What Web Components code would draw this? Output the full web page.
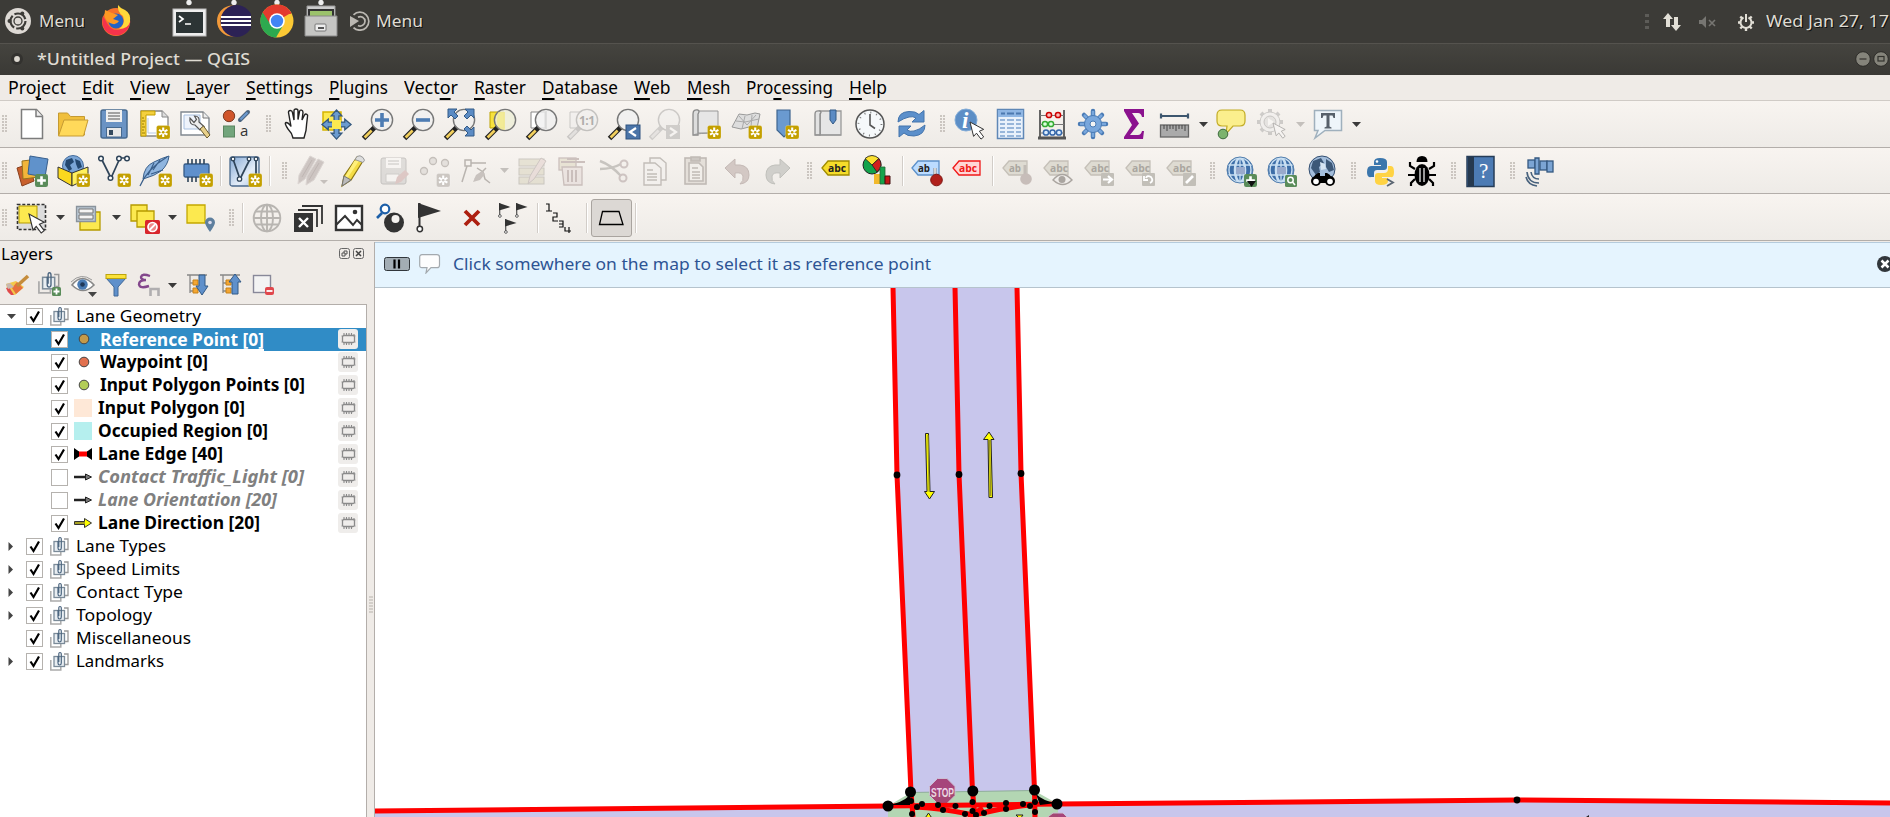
<!DOCTYPE html>
<html lang="en">
<head>
<meta charset="utf-8">
<title>QGIS</title>
<style>
html,body{margin:0;height:100%;overflow:hidden}
body{font:17px/20px "Noto Sans","Open Sans",sans-serif;color:#000;background:#efebe7}
</style>
</head>
<body>
<qgis-app></qgis-app>
<script>
// ---------- shared drawing helpers (all icons live in a 32x32 box) ----------
const svg=(b,w=32,h=w,vb=`0 0 ${w} ${h}`)=>`<svg xmlns="http://www.w3.org/2000/svg" width="${w}" height="${h}" viewBox="${vb}">${b}</svg>`;
const star=(x=17,y=17,c='#c4a000')=>`<g transform="translate(${x} ${y})"><rect x=".5" y=".5" width="13.5" height="13.5" rx="2" fill="${c}" stroke="#fff3" /><path d="M7.2 2.4v9.6M3 4.8l8.4 4.8M3 9.6l8.4-4.8" stroke="#fff" stroke-width="2.1"/><circle cx="7.2" cy="7.2" r="1.3" fill="${c}"/></g>`;
const plus=(x,y,s=12)=>`<g transform="translate(${x} ${y}) scale(${s/12})"><rect width="12" height="12" rx="2" fill="#5a8c5a"/><path d="M6 2v8M2 6h8" stroke="#fff" stroke-width="2.4"/></g>`;
const lens=(inner='',fill='#f0f0f0cc',hy='#f1cf5d',dk='#222')=>`<path d="M1.5 30.500L13 19" stroke="${dk}" stroke-width="5"/><path d="M2.6 29.4l7-7" stroke="${hy}" stroke-width="2.8"/><circle cx="20" cy="12" r="10.6" fill="${fill}" stroke="#777" stroke-width="1.4"/>${inner}`;
const cursor=(x,y,s=1)=>`<path transform="translate(${x} ${y}) scale(${s})" d="M0 0l4 16 3.2-3.6 5 6.6 3-2.4-4.8-6.4 4.8-2z" fill="#fff" stroke="#333" stroke-width="1.1"/>`;
const tag=(f,s,t,c,w=28,x=2)=>`<path d="M${x} 13l6-7h${w-6}v14H${x+6}z" fill="${f}" stroke="${s}" stroke-width="1.3"/><text x="${x+6}" y="17" font-family="Open Sans" font-weight="700" font-size="11" fill="${c}" textLength="${t.length>2?18:12}" lengthAdjust="spacingAndGlyphs">${t}</text>`;
const gtag=t=>tag('#dedbd2','#c5c0b8',t,'#aaa69f',24,2);
const globe=`<circle cx="16" cy="15" r="13" fill="#3d6ea8"/><g fill="none" stroke="#c9dff2" stroke-width="2.6"><ellipse cx="16" cy="15" rx="5" ry="12"/><ellipse cx="16" cy="15" rx="11" ry="12.3" stroke-width="1.4"/><path d="M16 3v24M4 10h24M3 20h26" stroke-width="1.3"/></g><path d="M12 12h9v7h-9z" fill="#9ac"/><circle cx="16" cy="15" r="13" fill="none" stroke="#5580ae"/>`;
const flag=(x,y,s)=>`<g transform="translate(${x} ${y}) scale(${s})"><path d="M0 0l23 8-23 7z" fill="#333"/><path d="M1.5 0v25" stroke="#333" stroke-width="2"/><circle cx="1.8" cy="26" r="2.7" fill="#fff" stroke="#333" stroke-width="1.5"/></g>`;
const memo=(c='#8a8a8a')=>`<rect x="4.500" y="6.500" width="12" height="7" rx="1.500" fill="none" stroke="${c}" stroke-width="1.3"/><path d="M6 4v2.500M8.500 4v2.500M11 4v2.500M13.500 4v2.500M16 5v2M6 13.500v2.500M8.500 13.500v2.500M11 13.500v2.500M13.500 13.500v2.500M3.500 7h1M3.500 13h1M16.500 7h1M16.500 13h1" stroke="${c}" stroke-width="1.1"/>`;
const groupIco=`<path d="M.800 9v10h10v-3M2.500 14.500" fill="none" stroke="#aaa" stroke-width="1.5"/><rect x="4" y="5.500" width="10.500" height="10" fill="#e9eef2" stroke="#7b8b99" stroke-width="1.3"/><path d="M14 3h4v10.500h-3" fill="none" stroke="#999" stroke-width="1.3"/><path d="M8 5v7q0 2 1.600 2t1.700-2V3.500Q11.300 1.500 10 1.500T8.800 3.500V11" fill="none" stroke="#4c6680" stroke-width="1.2"/>`;
const arr4='M16 1l5.500 6h-3v6.500h6V10.500L31 16l-6.500 5.500v-3h-6v6.500h3L16 31l-5.500-6h3v-6.500h-6v3L1 16l6.500-5.500v3h6V7h-3z';

const ICONS={
newp:'<path d="M5.500 1.500h15l6 6.500v22.500h-21z" fill="#fff" stroke="#7c7c7c" stroke-width="1.500"/><path d="M20 1.500v7h6.500" fill="#eee" stroke="#7c7c7c" stroke-width="1.500"/>',
open:'<path d="M1.500 27V5h9l3 3.500h14V27z" fill="#f0bf3c" stroke="#c59a32"/><path d="M1.500 28L7 12h24l-4.500 16z" fill="#ffd95a" stroke="#c69b33"/>',
save:'<rect x="3" y="2" width="26" height="28" rx="2" fill="#6a93c4" stroke="#46698f" stroke-width="1.500"/><path d="M8 2h16v12H8z" fill="#f0f0f0"/><path d="M10 5h12M10 8h12M10 11h12" stroke="#555" stroke-width="1.200"/><rect x="8.500" y="19.500" width="15" height="9.500" fill="#e8e8e8" stroke="#46698f"/><path d="M11 22h4v5h-4z" fill="#34495e"/>',
newlay:'<path d="M2 3h21l6 6v19H2z" fill="#fff" stroke="#888" stroke-width="1.300"/><path d="M23 3v6h6" fill="#ddd" stroke="#888"/><path d="M9 10v15h8" fill="none" stroke="#b9cbe6"/><path d="M2 3h14v4H7v21H2z" fill="#f4d03f" stroke="#c4a000"/><path d="M3 10h2m-2 3h3m-3 3h2m-2 3h3m-3 3h2m-2 3h3" stroke="#9a7f00"/>'+star(17,17),
laymgr:'<path d="M1 4h22l6 6v17H1z" fill="#fff" stroke="#808890" stroke-width="1.400"/><path d="M4 7h16v14H4z" fill="#eef3fb" stroke="#a8c0e0"/><path d="M23 4v6h6" fill="#eee" stroke="#777"/><path d="M10 10q-1 7 5 7l5 5 4-3.500-5-4.500q1-6-4.500-6l2 3.500-2.500 3z" fill="#eee" stroke="#555" stroke-width="1.200"/><path d="M20 21l3.500-3 6.500 9-3 3z" fill="#e8d08a" stroke="#695b2f"/>',
style:'<circle cx="8" cy="8" r="5.700" fill="#d0552b" stroke="#7d3a22"/><path d="M19 12L27 4" stroke="#4b6580" stroke-width="4" stroke-linecap="round"/><path d="M19.500 11.500L26.500 4.500" stroke="#6d9bd0" stroke-width="2"/><rect x="2.500" y="18" width="11" height="11" fill="#72a57c" stroke="#5a8560"/><text x="19" y="28" font-family="Open Sans" font-size="15" fill="#333">a</text>',
pan:'<path transform="translate(3 0)" d="M10 30q-1-5-5-9-4-6-2-6.500 2.500 0 5 4L5.500 4.500q0-2 1.800-2t2.200 2L11 12V3q0-2 2-2t2 2v8.500l1.500-8q.500-1.800 2-1.300t1.500 2.300L19 12l2.500-5q1-1.500 2.300-.7t.7 2.200q-1 8-1.500 14l-2 7.500z" fill="#fff" stroke="#222" stroke-width="1.400"/>',
pansel:'<path d="M2 4h18v18H2z" fill="#fce94f" stroke="#d5b400" stroke-width="1.500"/><path transform="translate(0 1) scale(.97)" d="'+arr4+'" fill="#6b9bd0" stroke="#35597f" stroke-width="1.300"/><path d="M11 12h9v9h-9z" fill="#fce94f"/>',
zin:lens('<path d="M20 5v14M13 12h14" stroke="#4d7cb3" stroke-width="3.600"/>'),
zout:lens('<path d="M13 12h14" stroke="#4d7cb3" stroke-width="3.600"/>'),
zfull:lens('','#eee8')+'<g fill="#5b8bc4" stroke="#335a86"><path d="M4 1h9l-3 3 4 4-3 3-4-4-3 3z"/><path d="M30 1v9l-3-3-4 4-3-3 4-4-3-3z"/><path d="M30 28h-9l3-3-4-4 3-3 4 4 3-3z"/></g>',
zsel:'<path d="M5 4h14v16H5z" fill="#f7e23e" stroke="#bda300"/>'+lens('<path d="M13 4h7v18q-8 0-8-9z" fill="#f3e96c88"/>','#eeeed8e0'),
zlay:'<path d="M5 4h14v16H5z" fill="#fff" stroke="#888"/>'+lens('<path d="M20 3v18" stroke="#ccc"/>'),
znat:'<g opacity=".38"><path d="M3 4h14v16H3z" fill="#eee" stroke="#888"/>'+lens('<text x="12" y="17" font-family="Open Sans" font-weight="700" font-size="12" fill="#444" textLength="16">1:1</text>','#eee','#ccc','#888')+'</g>',
zlast:lens()+'<rect x="18" y="17" width="14" height="14" fill="#4a74a8" stroke="#2f5380"/><path d="M28 20l-6 4 6 4" fill="none" stroke="#fff" stroke-width="2.200"/>',
znext:'<g opacity=".32">'+lens('','#eee','#ccc','#888')+'<rect x="17" y="17" width="14" height="14" fill="#888"/><path d="M21 20l6 4-6 4" fill="none" stroke="#fff" stroke-width="2.200"/></g>',
newmap:'<path d="M7 3h21v22H7z" fill="#e6e6e6" stroke="#999"/><path d="M8 2q-5-1-5 4v21h5V6q2-3 0-4z" fill="#ddd" stroke="#888" stroke-width="1.300"/><path d="M3 27q4-2 25-2" fill="none" stroke="#999"/>'+star(17,17),
new3d:'<path d="M8 6l8 1 8-2 5 1-3 14-8-1-8 2-9-2z" fill="#ddd" stroke="#999"/><path d="M5 13l9 1 14-3M14 8l-3 13M21 7l-1 12M8 8l8 9 9-10" fill="none" stroke="#aaa"/>'+star(17,17),
newbm:'<path d="M5 2h13v21l-6 6-7-7z" fill="#6a9ad0" stroke="#3f658f" stroke-width="1.200"/>'+star(13,17),
showbm:'<path d="M7 3h21v24H7z" fill="#e6e6e6" stroke="#999" stroke-width="1.300"/><path d="M7 3q-5-1-5 3v21h5V6q2-2 0-3z" fill="#e2e2e2" stroke="#888" stroke-width="1.300"/><path d="M2 27h26" stroke="#999"/><path d="M17 2h6v10l-3 4-3-4z" fill="#5b8bc4" stroke="#335a86"/>',
clock:'<circle cx="16" cy="16" r="14" fill="#f6f9fb" stroke="#555" stroke-width="1.500"/><circle cx="16" cy="16" r="11.500" fill="none" stroke="#777" stroke-width="1.800" stroke-dasharray="1 5.020"/><path d="M16 6v11l5 3.500" fill="none" stroke="#555" stroke-width="1.600"/>',
refresh:'<path d="M3 14Q3 4 14 3.500q7-.3 10 3l5-4V14H17l4-4q-3-2-7-1-5 1-11 5z" fill="#5b8fcb" stroke="#4474ac"/><path d="M30 17q0 10-11 11-7 .3-10-3l-5 4V18h12l-4 4q3 2 7 1 5-1 11-6z" fill="#5b8fcb" stroke="#4474ac"/>',
ident:'<circle cx="12" cy="12" r="11" fill="#5c8ec6" stroke="#84add8"/><text x="8" y="20" font-family="Liberation Serif" font-style="italic" font-weight="700" font-size="23" fill="#fff">i</text>'+cursor(16,14,.9),
table:'<rect x="2.500" y="1.500" width="26" height="29" fill="#e9f1fb" stroke="#5f87b6" stroke-width="1.500"/><rect x="3" y="2" width="25" height="7" fill="#8fb6e4"/><path d="M6 5.500h4m2 0h7m2 0h5" stroke="#4c79b0" stroke-width="2"/><path d="M5 12h5m2 0h7m2 0h5M5 16h5m2 0h7m2 0h5M5 20h5m2 0h7m2 0h5M5 24h5m2 0h7m2 0h5M5 28h5m2 0h7m2 0h5" stroke="#7ea3cf" stroke-width="1.600"/>',
calc:'<path d="M4 2v28M28 2v28" stroke="#555" stroke-width="1.800"/><path d="M4 7.500h24M4 16.500h24M4 25h24" stroke="#777" stroke-width="1.200"/><g stroke-width="1.500"><g fill="#fbb" stroke="#c00"><circle cx="13" cy="7" r="2.600"/><circle cx="22" cy="7" r="2.600"/></g><g fill="#dfd" stroke="#3a3"><circle cx="9" cy="16" r="2.600"/><circle cx="15" cy="16" r="2.600"/></g><g fill="#def" stroke="#36a"><circle cx="10" cy="24.500" r="2.600"/><circle cx="16.500" cy="24.500" r="2.600"/><circle cx="23" cy="24.500" r="2.600"/></g></g><path d="M2 30h28" stroke="#555" stroke-width="3"/>',
gear:'<g stroke="#4a7bb5" stroke-width="4.500" stroke-linecap="round"><path d="M16 3v26M3 16h26M7 7l18 18M7 25L25 7"/></g><g stroke="#79a7dc" stroke-width="2.500"><path d="M16 3v26M3 16h26M7 7l18 18M7 25L25 7"/></g><circle cx="16" cy="16" r="8.500" fill="#79a7dc" stroke="#4a7bb5"/><circle cx="16" cy="16" r="3" fill="#f4f4f4" stroke="#4a7bb5"/>',
sigma:'<path d="M6 1h20v8h-2q-1-4-4-4h-6l7 10.500L12 27h8q3 0 4-4h2l-1 8H6v-2l8-12L6 3z" fill="#8b128e"/>',
measure:'<path d="M2 8h27M2 5.500v5M29 5.500v5" stroke="#3d566e" stroke-width="2.200"/><rect x="1.500" y="17" width="28" height="12" fill="#aaa" stroke="#666" stroke-width="1.300"/><path d="M5 17v4m3-4v6m3-6v4m3-4v4m3-4v6m3-6v4m3-4v4m3-4v6" stroke="#444"/>',
tip:'<path d="M7 2h18q5 0 5 5v6q0 5-5 5h-7l-7 8 1-8H7q-5 0-5-5V7q0-5 5-5z" fill="#fbef8d" stroke="#c2ab23" stroke-width="1.200"/><circle cx="8" cy="26" r="4.800" fill="#7cb36e" stroke="#3d6a3d"/>',
action:'<g opacity=".35"><g stroke="#888" stroke-width="4"><path d="M14 1v26M1 14h26M5 5l18 18M5 23L23 5"/></g><circle cx="14" cy="14" r="10" fill="#eee" stroke="#888"/><circle cx="14" cy="14" r="6" fill="#ccc" stroke="#777"/><path d="M12 10l6 4-6 4z" fill="#fff"/>'+cursor(17,15,.8)+'</g>',
ttext:'<path d="M2.500 2.500h27v20H13L3 30l3-7.500H2.500z" fill="#eef5fa" stroke="#9fb0bd" stroke-width="1.500"/><path d="M9 5h14v5h-1.500l-1-2.500h-3v11l2 1v1h-7v-1l2-1v-11h-3L10.500 10H9z" fill="#57606a"/>',
dsrc:'<path d="M1 13l12-4 5 17-12 5z" fill="#c9602c" stroke="#8a3f1c"/><path d="M6 6l17-2v18L7 24z" fill="#f2b53a" stroke="#96711e"/><path d="M14 1l18 3-3 18-17-3z" fill="#6092cb" stroke="#385f8d"/>'+plus(19,19,13),
gpkg:'<circle cx="16" cy="11" r="10.500" fill="#7aa5d6" stroke="#456d9d"/><path d="M9 5l6-2 2 4-4 3 2 4-3 2-4-6zM18 4l5 2 2 6-4 2-2-5z" fill="#23476f"/><path d="M1 12l14 6v13L1 23z" fill="#fbd91e" stroke="#333"/><path d="M31 12l-16 6v13l16-8z" fill="#fff15c" stroke="#333"/>'+star(19,18),
shp:'<path d="M3 3l10 20L22 3h6" fill="none" stroke="#2f4459" stroke-width="1.700"/><g fill="#fff" stroke="#2f4459" stroke-width="1.500"><circle cx="3" cy="3.500" r="2.300"/><circle cx="12.500" cy="23" r="2.300"/><circle cx="21" cy="3.500" r="2.300"/><circle cx="29" cy="3.500" r="2.300"/></g>'+star(19,18),
feather:'<path d="M4 24Q5 11 15 7q8-4 15-6-1 9-8 15-7 5-15 7z" fill="#8fb5df" stroke="#3a5f8a"/><path d="M1 31Q8 14 28 2M9 20l6-12M14 15l7-10M12 19l12-4" fill="none" stroke="#3a5f8a" stroke-width="1.200"/>'+star(19,18),
mem:'<rect x="4" y="9" width="25" height="13" rx="1.500" fill="#5f90cc" stroke="#365b87" stroke-width="1.300"/><path d="M8 4v5M12 4v5M16 4v5M20 4v5M24 4v5M8 22v5M12 22v5M16 22v5" stroke="#2f4459" stroke-width="1.600"/>'+star(19,18),
virt:'<defs><linearGradient id="v" x1="0" y1="0" x2="1" y2="1"><stop offset="0" stop-color="#86aad6"/><stop offset=".6" stop-color="#e4edf8"/><stop offset="1" stop-color="#a9c3e2"/></linearGradient></defs><rect x="1" y="2" width="29" height="29" rx="2" fill="url(#v)" stroke="#49688c" stroke-width="1.300"/><path d="M4 4l7 20L21 4M27 4v16" fill="none" stroke="#2f4459" stroke-width="1.700"/><g fill="#fff" stroke="#2f4459" stroke-width="1.300"><circle cx="4" cy="4" r="1.800"/><circle cx="10.500" cy="24" r="2.200"/><circle cx="20" cy="4" r="1.800"/><circle cx="27" cy="4" r="1.800"/></g>'+star(19,18),
pencils:'<g fill="#cdc5c2" stroke="#dcd6d3"><path d="M2 29l1-9L14 1l6 3L9 24z"/><path d="M10 30l1-9L22 4l6 3-10 18z"/><path d="M16 5L6 22M23 8L13 25" stroke="#bfb6b3" fill="none"/></g><path d="M24 25h8l-4 4z" fill="#c5c0bc"/>',
pencil:'<path d="M5 31l2-10L20 2l6 4-12 19z" fill="#f4dc45" stroke="#8a7414" stroke-width="1.200"/><path d="M17.500 5.500L8 22l2.500 1L22 6z" fill="#fff07a"/><path d="M5 31l2-10 7 4z" fill="#bbb" stroke="#777"/><path d="M20 1.500q3-2 6 1t0 5l-8-3z" fill="#ddd" stroke="#999"/>',
gsave:'<g opacity=".28"><rect x="3" y="3" width="25" height="26" rx="2" fill="#aaa" stroke="#555"/><path d="M8 3h15v10H8z" fill="#fff"/><path d="M10 6h11M10 9h11" stroke="#555"/><path d="M8 19h13v8H8z" fill="#fff" stroke="#777"/><path d="M17 29l2-7 8-7 4 4-8 8z" fill="#a66"/></g>',
gpts:'<g fill="#e4e0dc" stroke="#c4bfba" stroke-width="1.300"><circle cx="14" cy="6" r="3.500"/><circle cx="26" cy="8" r="3.500"/><circle cx="5" cy="16" r="3.500"/></g>'+star(17,18,'#ccc7c2'),
gnode:'<g stroke="#b9b4af" fill="none" stroke-width="1.500"><rect x="5" y="5" width="6" height="6"/><path d="M7 11L2 27M11 8h15M26 13L15 24M17 13l6 4 2 7 5 4"/></g><path d="M13 27l3-7 6-4 3 3-5 6z" fill="#c8c2be"/>',
gtable:'<g opacity=".45"><g fill="#d6d0b6" stroke="#9c988e"><rect x="3" y="4" width="25" height="7"/><rect x="3" y="13" width="25" height="7"/><rect x="3" y="22" width="25" height="7"/></g><path d="M12 29l2-8L25 3l5 3-12 18z" fill="#ddc8c4" stroke="#a09490"/></g>',
trash:'<g opacity=".45" stroke="#9b8684" fill="#e3d6d3" stroke-width="1.300"><rect x="2" y="3" width="17" height="12" fill="#d9d3b8"/><path d="M5 12h20v18H7z"/><path d="M4 7h24M10 4h12M11 15v12M15 15v12M19 15v12" stroke-width="2"/></g>',
cut:'<g opacity=".5"><path d="M2 6q11 4 21 15M2 14q12 0 21-5" fill="none" stroke="#9c9994" stroke-width="2.400"/><circle cx="26" cy="9" r="3.500" fill="none" stroke="#a99" stroke-width="2"/><circle cx="25" cy="23" r="3.500" fill="none" stroke="#a99" stroke-width="2"/></g>',
copy:'<g fill="#f3f0ed" stroke="#c2bdb8" stroke-width="1.400"><path d="M11 3h10l6 5v17H11z"/><path d="M5 8h11l6 5v17H5z"/><path d="M8 15h6m-6 4h10m-10 3h10m-10 3h10"/></g>',
paste:'<g fill="#f1eeea" stroke="#c0bab5" stroke-width="1.600"><rect x="5" y="3" width="21" height="26" fill="#e4dfd9"/><path d="M9 8h10l4 4v14H9z"/><path d="M11 2h9v4h-9z" fill="#ccc7c2"/><path d="M12 13h6m-6 4h8m-8 3h8m-8 3h8"/></g>',
undo:'<path d="M4 13L14 4v6h5q9 1 9 10 0 8-9 9 4-3 3-8-1-4-8-3v5z" fill="#d3c8c4" stroke="#c4b9b5"/>',
redo:'<path d="M28 13L18 4v6h-5q-9 1-9 10 0 8 9 9-4-3-3-8 1-4 8-3v5z" fill="#d0cfcb" stroke="#c0c0bb"/>',
abcY:tag('#f5dc2a','#a08b00','abc','#222',27,1),
diag:'<circle cx="10" cy="10" r="9" fill="#13a24b" stroke="#222"/><path d="M10 10L3 3.500q7-6 14 0z" fill="#fce030" stroke="#222" stroke-width=".8"/><path d="M10 10l7-6.500q5 7-2 13.500z" fill="#d11d1d" stroke="#222" stroke-width=".8"/><path d="M12 19h6v10h-6z" fill="#f2b92c"/><path d="M18 12h5v17h-5z" fill="#16a34c" stroke="#263" stroke-width=".8"/><path d="M23 21h5v8h-5z" fill="#c41818" stroke="#411"/>',
abPin:tag('#bcdcff','#5c90c9','ab','#222',27,1)+'<path d="M24 13v10" stroke="#888" stroke-width="3"/><path d="M24 13v10" stroke="#eee" stroke-width="1.500"/><circle cx="25.500" cy="25" r="5.800" fill="#b0201b" stroke="#801511"/>',
abcR:tag('#ffd6d6','#f01818','abc','#f01818',27,1),
g1:gtag('ab')+'<path d="M24 10v10" stroke="#c2bcb6" stroke-width="3"/><circle cx="25" cy="24" r="5.800" fill="#c7bdb9"/>',
g2:gtag('abc')+'<path d="M11 25q9-11 19 0-9 9-19 0z" fill="#f0edea" stroke="#aaa5a0" stroke-width="1.400"/><circle cx="20" cy="24.500" r="3.500" fill="#aaa5a0"/>',
g3:gtag('abc')+'<rect x="18" y="18" width="13" height="13" rx="1" fill="#c2bfb8"/><path d="M20 24.500h8M25 21l4 3.500-4 3.500" fill="none" stroke="#fff" stroke-width="2.200"/>',
g4:gtag('abc')+'<rect x="18" y="18" width="13" height="13" rx="1" fill="#c2bfb8"/><path d="M22 23q1-3 5-1 3 4-1 6M20 21v4h4" fill="none" stroke="#fff" stroke-width="1.800"/>',
g5:gtag('abc')+'<rect x="18" y="18" width="13" height="13" rx="1" fill="#c2bfb8"/><path d="M21 28l7-7" fill="none" stroke="#fff" stroke-width="2.600"/>',
gl1:globe+plus(20,19,13)+'<path d="M23 26h9l-4.500 6z" fill="#111"/>',
gl2:globe+'<rect x="20" y="20" width="12" height="12" rx="1.500" fill="#5a8c5a"/><circle cx="25.500" cy="25" r="2.700" fill="none" stroke="#fff" stroke-width="1.500"/><path d="M27.500 27l2.500 3" stroke="#fff" stroke-width="1.600"/>',
gl3:'<circle cx="16" cy="14" r="13" fill="#a3bddb" stroke="#334e70"/><path d="M7 6l8-3 3 5-5 4 1 5-4 3-5-7zM20 4l6 4 2 7-5 2-3-5z" fill="#3d5878"/><path d="M14 7l5 2 1 5-5 1z" fill="#d6e4f2"/><path d="M9 20l3-2h2v3h5v-3h2l3 2 3 8H6z" fill="#000"/><circle cx="10" cy="26" r="5" fill="#000"/><circle cx="24" cy="26" r="5" fill="#000"/><circle cx="10" cy="26.500" r="2.800" fill="#fff"/><circle cx="24" cy="26.500" r="2.800" fill="#fff"/>',
py:'<path d="M15 3q-6 0-6 4v3h7v1H6q-4 0-4 6t4 5h3v-4q0-3 3-3h7q3 0 3-3V7q0-4-7-4z" fill="#3b76ac"/><path d="M16 30q-6 0-6-4v-5q0-3 3-3h6q4 0 4-4v-3h3q3 0 3 6t-3 5h-9v1h6v3q0 4-7 4z" fill="#ffd343"/><circle cx="12" cy="6.500" r="1.300" fill="#fff"/><path d="M22 24l6 3.500-6 3.500" fill="none" stroke="#5b6672" stroke-width="1.800"/>',
bug:'<ellipse cx="16" cy="20" rx="7.500" ry="11" fill="#000"/><path d="M10.500 7q0-6 5.500-6t5.500 6z" fill="#000"/><path d="M9 14L4 11V7M23 14l5-3V7M9 20H2M23 20h7M9 24l-4 4v3M23 24l4 4v3" fill="none" stroke="#000" stroke-width="2.200"/><path d="M14 13v14M18 13v14" stroke="#fff" stroke-width="1.200"/><path d="M9 8.500h14" stroke="#f3f0ec" stroke-width="1.200"/>',
help:'<rect x="2" y="1.500" width="27" height="30" fill="#4c7bb4" stroke="#263c57" stroke-width="1.500"/><path d="M3 2h6v29H3z" fill="#26394f"/><text x="14" y="23" font-family="Liberation Serif" font-size="21" fill="#fff">?</text>',
sat:'<g fill="#7ba4d3" stroke="#345880" stroke-width="1.300"><rect x="4" y="5" width="7" height="8"/><rect x="16" y="6" width="7" height="9"/><rect x="23" y="6" width="6" height="11"/><path d="M11 3h4v16h-4z"/></g><path d="M2 22q2 8 11 9M3 17q1 11 12 11M7 17q1 7 8 7" fill="none" stroke="#47617c" stroke-width="1.600"/>',
sel:'<path d="M1.500 2.500h28v25h-28z" fill="#ddd" stroke="#333" stroke-width="1.600" stroke-dasharray="3 1.800"/><path d="M3 4h18v17H3z" fill="#fce94f" stroke="#b59b00"/>'+cursor(13,12,1),
form:'<path d="M8 10h20v18H8z" fill="#fce94f" stroke="#b59b00" stroke-width="1.300"/><path d="M4.500 4.500h19v15h-19z" fill="#b9c6d2" stroke="#8a939c" stroke-width="1.300"/><path d="M7 7h14v4H7zM7 13h14v4H7z" fill="#f4f4f4" stroke="#777"/>',
desel:'<path d="M3 3h16v16H3z" fill="#fce94f" stroke="#b59b00" stroke-width="1.300"/><path d="M9 9h17v16H9z" fill="#fce94f" stroke="#b59b00" stroke-width="1.300"/><rect x="17" y="18" width="15" height="14" rx="1.500" fill="#d8262c"/><circle cx="24.500" cy="25" r="4.500" fill="#e88" stroke="#fff" stroke-width="1.700"/><path d="M21.500 28l6-6" stroke="#fff" stroke-width="1.800"/>',
selloc:'<path d="M3 3h18v18H3z" fill="#fce94f" stroke="#c3a800" stroke-width="1.300"/><path d="M26 30q-5-7-5-9.500a5 5 0 0 1 10 0q0 2.500-5 9.500z" fill="#5e7f9e"/><circle cx="26" cy="20.500" r="1.800" fill="#dde"/>',
wire:'<g fill="none" stroke="#b8b5b1" stroke-width="1.900"><circle cx="16" cy="16" r="13.300"/><ellipse cx="16" cy="16" rx="6" ry="13.300"/><path d="M16 3v26M3 16h26M5 9.500h22M5 22.500h22"/></g>',
xst:'<path d="M10 4h20v18M6 8h19v17" fill="none" stroke="#333" stroke-width="1.800"/><rect x="2" y="11" width="19" height="19" fill="#333"/><path d="M7 16l9 9M16 16l-9 9" stroke="#fff" stroke-width="2.400"/>',
img:'<rect x="3" y="4" width="26" height="24" fill="#fff" stroke="#333" stroke-width="2.400"/><path d="M3 23l9-9 8 9 4-5 5 5" fill="none" stroke="#333" stroke-width="2"/><circle cx="22" cy="10" r="2.300" fill="#333"/>',
gps:'<circle cx="20" cy="20.500" r="10" fill="#333"/><circle cx="21.500" cy="17" r="4" fill="#f6f3f0"/><circle cx="11" cy="7" r="4.300" fill="#fff" stroke="#1d5fa8" stroke-width="2.200"/><path d="M8 11l-5 5" stroke="#1d5fa8" stroke-width="2.700"/>',
flag:flag(3,1,1),
redx:'<path d="M9 9l14 14M23 9L9 23" stroke="#ad1f10" stroke-width="3.800"/>',
flags:flag(2,1,.5)+flag(19,1,.5)+flag(8,17,.5),
nums:'<g fill="none" stroke="#111" stroke-width="1.200"><path d="M0 2h3v7M0 9h6"/><path d="M7 11h4v4H7v4h5"/><path d="M13 19h4v6h-4M13 22h4"/><path d="M19 25v4h6M23 25v6"/></g>',
trap:'<path d="M7.500 9.500h16.500l4 13H4.500z" fill="none" stroke="#000" stroke-width="1.300"/>',
// layer panel icons
brush:'<path d="M5 15l10-3 8 6-9 8q-7 0-9-11z" fill="#f2c94b"/><path d="M5 19l3-1 5 8h-3q-4-3-5-7z" fill="#e04a4a"/><path d="M11 19l5-6 6 6-7 6z" fill="#e8703c"/><path d="M16 17l11-10" stroke="#c58c3b" stroke-width="3.500"/><path d="M5 15l4-1 4 4-6 2z" fill="#c7b8b0"/>',
addgrp:'<g transform="translate(4 2) scale(1.150)">'+groupIco+'</g>'+plus(18,18,9),
eye:'<path d="M5 16q10-13 22 0-11 11-22 0z" fill="#fff" stroke="#888" stroke-width="1.600"/><circle cx="15.500" cy="15.500" r="5.200" fill="#4a7bb3"/><circle cx="15.500" cy="15.500" r="2.300" fill="#203858"/><path d="M4 13Q14 3 25 11" fill="none" stroke="#999"/><path d="M21 23h9l-4.500 5z" fill="#444"/>',
funnel:'<path d="M6 9h20l-8 9v9h-4v-9z" fill="#5f90cb" stroke="#406898"/><rect x="6" y="5.500" width="20" height="4" fill="#fbe23a" stroke="#bca40f"/>',
eps:'<path d="M17 7q-8-3-9 1 0 3 5 3-7 0-7 4.500 1 4.500 10 1.500" fill="none" stroke="#83478c" stroke-width="2.400"/><path d="M17.500 27v-7h8v7M17.500 23v4M25.500 23v4" fill="none" stroke="#b0aeb0" stroke-width="2.600"/>',
exp:'<path d="M6 6h20M9 6v18M9 14h4M9 22h4" fill="none" stroke="#888" stroke-width="1.300"/><path d="M12 11h5v5h-5zM12 19h5v5h-5z" fill="#f4a633" stroke="#c78218"/><path d="M18 6h6v11h3l-6 9-6-9h3z" fill="#5f90cb" stroke="#335a86"/>',
col:'<path d="M6 6h20M9 6v18M9 14h4M9 22h4" fill="none" stroke="#888" stroke-width="1.300"/><path d="M12 11h5v5h-5zM12 19h5v5h-5z" fill="#f4a633" stroke="#c78218"/><path d="M18 25h6V13h3l-6-8-6 8h3z" fill="#5f90cb" stroke="#335a86"/>',
rem:'<rect x="6.500" y="6.500" width="17" height="17" fill="#f3f3f3" stroke="#889" stroke-width="1.400"/><rect x="18" y="18" width="9" height="8" rx="2" fill="#e0474c"/><path d="M19.500 22h6" stroke="#fff" stroke-width="1.800"/>',
};

const define=(name,css,html,after)=>customElements.define(name,class extends HTMLElement{
  connectedCallback(){
    if(this.shadowRoot)return;
    this.attachShadow({mode:'open'}).innerHTML=`<style>${css}</style>${typeof html==='function'?html(this):html}`;
    if(after)after(this);
  }
});

// Text squeezed or stretched horizontally to the requested width
define('fit-text',`:host{display:block;white-space:nowrap;flex:none}span{display:inline-block;transform-origin:0 50%}
::slotted(u){text-decoration:underline;text-decoration-thickness:1.500px;text-underline-offset:4px;text-decoration-skip-ink:none}`,
'<span><slot></slot></span>',el=>{
  const w=+el.getAttribute('w'),s=el.shadowRoot.querySelector('span');
  const n=s.getBoundingClientRect().width;
  el.style.width=w+'px'; if(n)s.style.transform=`scaleX(${w/n})`;
});
define('tool-icon',`:host{display:flex;width:41px;height:38px;flex:none;align-items:center;justify-content:center;box-sizing:border-box}
:host([small]){width:33px}:host([pressed]){background:#dcd8d4;border:1px solid #a9a49f;border-radius:3px}svg{display:block;overflow:visible}`,
el=>svg(ICONS[el.getAttribute('name')]));
define('tool-sep',`:host{display:block;flex:none;width:8px;height:30px}i{display:block;width:1px;height:30px;margin-left:3px;background:#d2cdc8;border-right:1px solid #fff}`,'<i></i>');
define('tool-grip',`:host{display:block;flex:none;width:18px;height:18px}:host([first]){width:11.500px}i{display:block;width:6px;height:18px;margin-left:8px;background:radial-gradient(circle at 1px 1px,#c9c4bf .7px,transparent .9px) 0 0/3px 3px}:host([first]) i{margin-left:2px}`,'<i></i>');
define('drop-arrow',`:host{display:flex;flex:none;width:15px;justify-content:center;color:#3a3a3a}:host([off]){color:#c4c0bc}`,svg('<path d="M0 0h9L4.500 5z" fill="currentColor"/>',9,5));
const bar=spec=>spec.split(' ').map((t,i)=>t==='|'?'<tool-sep></tool-sep>':t===':'?`<tool-grip ${i?'':'first'}></tool-grip>`:t==='v'?'<drop-arrow></drop-arrow>':t==='-v'?'<drop-arrow off></drop-arrow>':t[0]==='!'?`<tool-icon pressed name="${t.slice(1)}"></tool-icon>`:`<tool-icon name="${t}"></tool-icon>`).join('');
define('tool-bar',`:host{display:flex;align-items:center;height:46.670px;box-sizing:border-box;padding-top:1px;border-bottom:1px solid #b3aeaa;background:linear-gradient(#f8f4f0,#eeebe7)}`,el=>bar(el.getAttribute('items')));

define('top-panel',`:host{display:flex;align-items:center;height:43px;background:#3c3b37;color:#dfdbd2;text-shadow:1px 1px #111;font-size:17px}
fit-text{margin-top:-2px}
svg{display:block;flex:none}.a{margin-left:4px;margin-top:-2px}.m{margin-left:7px}.ff{margin-left:16px;margin-top:-2px}.apps{display:flex;gap:9.500px;margin-left:40px;margin-top:-1px}.k{margin-left:12px;margin-top:-2px}.t{margin-left:6px}.r{margin-left:auto;display:flex;align-items:center;width:251px}`,
()=>`<span class="a">${svg('<circle cx="14" cy="14" r="13" fill="#dedad5"/><circle cx="14" cy="14" r="7.500" fill="none" stroke="#3c3b37" stroke-width="2.200" stroke-dasharray="13.500 2.200" /><circle cx="14" cy="14" r="4" fill="none" stroke="#3c3b37" stroke-width="1.300"/><circle cx="5.500" cy="14" r="2" fill="#3c3b37"/><circle cx="18.300" cy="6.500" r="2" fill="#3c3b37"/><circle cx="18.300" cy="21.500" r="2" fill="#3c3b37"/>',28)}</span>
<fit-text class="m" w="46">Menu</fit-text>
<span class="ff">${svg('<circle cx="15" cy="17" r="14" fill="#f6722c"/><path d="M2 11Q-1 27 12 30q13 2 17-11 1-6-3-12 2 14-8 18-8 1-12-7z" fill="#f5334b"/><path d="M17 0q-1 7 5 11 3 8-4 13 9 0 11-7Q30 8 24 5q-4-1-7-5z" fill="#ffd83a"/><circle cx="15" cy="16" r="7.500" fill="#2463c4"/><path d="M4 5l7 3 6 2-5 4 6 2q-3 5-9 2Q2 15 4 5z" fill="#ff9a23"/>',31)}</span>
<span class="apps">${svg('<circle cx="17" cy="2.500" r="2.700" fill="#eee"/><rect x="1" y="9" width="33" height="27" fill="#eee" stroke="#bbb"/><rect x="4" y="12" width="27" height="21" fill="#2c3435"/><path d="M7 16l4 3-4 3M13 24h6" fill="none" stroke="#fff" stroke-width="1.700"/>',35,43)}
${svg('<circle cx="17" cy="2.500" r="2.700" fill="#eee"/><circle cx="15.500" cy="21" r="15.500" fill="#f39a3a"/><circle cx="19.500" cy="21" r="16" fill="#2c2255"/><path d="M4 17h31M4 21h31M4 25h31" stroke="#fff" stroke-width="2"/>',34,43)}
${svg('<circle cx="17" cy="2.500" r="2.700" fill="#eee"/><circle cx="17" cy="21" r="16.500" fill="#fcc934"/><path d="M17 21L2.700 12.700A16.500 16.500 0 0 1 31.300 12.700z" fill="#e33b2e"/><path d="M2.700 12.700A16.500 16.500 0 0 0 16 37.500l7-12z" fill="#2da94f"/><path d="M2.700 12.700L10 24l7-10h14.300A16.500 16.500 0 0 0 2.700 12.700z" fill="#e33b2e"/><path d="M2.700 12.700L10 24l7 5-1 8.500A16.500 16.500 0 0 1 2.700 12.700z" fill="#2da94f"/><circle cx="17" cy="21" r="7.800" fill="#fff"/><circle cx="17" cy="21" r="6.200" fill="#4285f4"/>',34,43)}
${svg('<circle cx="17" cy="2.500" r="2.700" fill="#eee"/><path d="M3 6h28v14H3z" fill="#ccc" stroke="#999"/><path d="M4 9h26v7H4z" fill="#333"/><path d="M6 11h22v6H6z" fill="#9bc26b"/><path d="M1 16h32v20H1z" fill="#c5c5c3" stroke="#888"/><rect x="11" y="24" width="11" height="7" rx="1" fill="#eee" stroke="#777"/><path d="M14 28h6" stroke="#555" stroke-width="2"/>',34,43)}</span>
<span class="k">${svg('<path d="M0 5l9 5-9 6z" fill="#bbb8b2"/><path d="M3.500 3.800a9 9 0 1 1 0 12.800" fill="none" stroke="#bbb8b2" stroke-width="1.700"/><path d="M8 6.200a4.700 4.700 0 1 1 0 8.200" fill="none" stroke="#bbb8b2" stroke-width="1.700"/>',20)}</span>
<fit-text class="t" w="47">Menu</fit-text>
<span class="r">${svg('<path d="M6 6h4v3H6zM6 12h4v3H6zM6 18h4v3H6z" fill="#5d5c58"/><g fill="#e2dfd6"><path d="M28 5l5 6h-3v8h-4v-8h-3zM36 23l-5-6h3V9h4v8h3z" transform="translate(1 0)"/></g><path d="M60 12h3l4-4v12l-4-4h-3z" fill="#777672"/><path d="M70 12l6 6M76 12l-6 6" stroke="#777672" stroke-width="1.600"/><g fill="none" stroke="#e2dfd6"><path d="M107 6v8" stroke-width="2"/><path d="M104.500 9.500a5.500 5.500 0 1 0 5 0" stroke-width="2"/><g stroke-width="2.400"><path d="M99 14.500h3M112 14.500h3M101.300 8.500l2 2M112.700 8.500l-2 2M101.300 20.500l2-2M112.700 20.500l-2-2M107 20v3"/></g></g>',127,28)}<fit-text w="123">Wed Jan 27, 17</fit-text></span>`);

define('title-bar',`:host{display:flex;align-items:center;height:32px;box-sizing:border-box;padding-bottom:2px;border-top:1px solid #55534e;background:linear-gradient(#45443f,#3a3935);color:#dfdbd2;font-weight:500}
svg{display:block}.d{margin-left:9px}.t{margin-left:12px}.b{margin-left:auto;margin-right:1px;display:flex;gap:2px}`,
()=>`<span class="d">${svg('<circle cx="8" cy="8" r="6" fill="#33322f"/><circle cx="8" cy="8" r="2.900" fill="#dcd8d0"/>',16)}</span><fit-text class="t" w="213">*Untitled Project — QGIS</fit-text>
<span class="b">${svg('<circle cx="8" cy="8" r="7.300" fill="#85847b" stroke="#2c2b28"/><path d="M4.500 8h7" stroke="#33322e" stroke-width="1.200"/>',16)}${svg('<circle cx="8" cy="8" r="7.300" fill="#85847b" stroke="#2c2b28"/><rect x="5" y="5.500" width="6" height="4.500" fill="none" stroke="#33322e" stroke-width="1.200"/>',16)}</span>`);

define('menu-bar',`:host{display:flex;align-items:center;gap:16px;height:26px;box-sizing:border-box;padding:0 0 1px 8px;border-bottom:1px solid #d0cbc6;background:#efebe7;font-size:17.500px}`,
()=>[['Pro<u>j</u>ect',58],['<u>E</u>dit',32],['<u>V</u>iew',40],['<u>L</u>ayer',44],['<u>S</u>ettings',67],['<u>P</u>lugins',59],['Vect<u>o</u>r',54],['<u>R</u>aster',52],['<u>D</u>atabase',76],['<u>W</u>eb',36.500],['<u>M</u>esh',43.500],['Pro<u>c</u>essing',87],['<u>H</u>elp',38]].map(([t,w])=>`<fit-text w="${w}">${t}</fit-text>`).join(''));

const check=on=>svg(`<rect x=".5" y=".5" width="16" height="16" fill="#fff" stroke="#b5b2ae"/>${on?'<path d="M4.500 8.500l3 4.500L13 3.500" fill="none" stroke="#000" stroke-width="2.200"/>':''}`,17);
const SYM={
 dot:c=>`<circle cx="10" cy="9" r="4.800" fill="${c}" stroke="#444"/>`,
 box:c=>`<rect width="18" height="18" fill="${c}"/>`,
 edge:()=>'<path d="M4 9h10" stroke="#f00" stroke-width="5"/><path d="M0 3l5 3.500v5L0 15zM18 3l-5 3.500v5l5 3.500z" fill="#000"/>',
 arrow:()=>'<path d="M0 9h12" stroke="#222" stroke-width="2.500"/><path d="M11.500 6l6 3-6 3z" fill="#777" stroke="#222"/>',
 yarrow:()=>'<path d="M.5 7.500h10V4.500l7 4.500-7 4.500v-3H.5z" fill="#ff0" stroke="#333"/><path d="M1 8h10v2H1z" fill="#a6a021"/>'
};
define('layer-group',`:host{display:flex;align-items:center;height:23px}svg{display:block}.e{width:9px;margin:0 10px 0 7px}.i{margin:0 7px 0 6.500px}`,
el=>`<span class="e">${el.hasAttribute('open')?svg('<path d="M0 2h9L4.500 7z" fill="#444"/>',9):el.hasAttribute('leaf')?'':svg('<path d="M1.500 0l4.500 4.500L1.500 9z" fill="#444"/>',9)}</span>${check(1)}<span class="i">${svg(groupIco,19,20)}</span><fit-text w="${el.getAttribute('w')}"><slot></slot></fit-text>`);
define('layer-item',`:host{display:flex;align-items:center;height:23px;padding-left:51px;font-weight:700;box-sizing:border-box}:host([sel]){background:#308cc6;color:#fff}:host([off]){color:#808080;font-style:italic}
svg{display:block}.s{margin:0 6px 0 6px}:host([pt]) .s{margin-right:8px}.m{margin:0 8px 0 auto;background:#efedeb;border-radius:3px}:host([sel]) fit-text{border-bottom:2px solid #fff;height:19px;line-height:20px;margin-top:2px}`,
el=>`${check(!el.hasAttribute('off'))}<span class="s">${svg(SYM[el.getAttribute('sym')](el.getAttribute('c')),18)}</span><fit-text w="${el.getAttribute('w')}"><slot></slot></fit-text><span class="m">${svg(memo(),20)}</span>`);

define('layers-panel',`:host{display:flex;flex-direction:column;width:367px;flex:none;box-sizing:border-box}
.h{display:flex;align-items:center;height:26px;padding:0 3px 0 1px}.h span{margin-left:auto;display:flex;gap:3px}svg{display:block}
.t{display:flex;align-items:center;height:37px}.l{flex:1;background:#fff;border:solid #b3aeaa;border-width:1px 1px 0 0;min-height:0;overflow:hidden}`,
()=>`<div class="h"><fit-text w="52">Layers</fit-text><span>${svg('<rect x=".5" y=".5" width="10" height="10" rx="2" fill="none" stroke="#666"/><path d="M5 5V3h3v3H6M3 5h3v3H3z" fill="none" stroke="#555"/>',11)}${svg('<rect x=".5" y=".5" width="10" height="10" rx="2" fill="none" stroke="#666"/><path d="M3 3l5 5M8 3L3 8" stroke="#444" stroke-width="1.500"/>',11)}</span></div>
<div class="t">${['brush','addgrp','eye','funnel','eps','v','exp','col','rem'].map(n=>n==='v'?'<drop-arrow></drop-arrow>':`<tool-icon small name="${n}"></tool-icon>`).join('')}</div>
<div class="l"><layer-group open w="125">Lane Geometry</layer-group>
<layer-item sel pt sym="dot" c="#c39a4a" w="164">Reference Point [0]</layer-item>
<layer-item pt sym="dot" c="#e2714f" w="108">Waypoint [0]</layer-item>
<layer-item pt sym="dot" c="#b2cc57" w="205">Input Polygon Points [0]</layer-item>
<layer-item sym="box" c="#fee8d7" w="147">Input Polygon [0]</layer-item>
<layer-item sym="box" c="#b5efee" w="170">Occupied Region [0]</layer-item>
<layer-item sym="edge" w="125">Lane Edge [40]</layer-item>
<layer-item off sym="arrow" w="206">Contact Traffic_Light [0]</layer-item>
<layer-item off sym="arrow" w="179">Lane Orientation [20]</layer-item>
<layer-item sym="yarrow" w="162">Lane Direction [20]</layer-item>
<layer-group w="90">Lane Types</layer-group><layer-group w="104">Speed Limits</layer-group><layer-group w="107">Contact Type</layer-group><layer-group w="76">Topology</layer-group><layer-group leaf w="115">Miscellaneous</layer-group><layer-group w="88">Landmarks</layer-group></div>`);

define('message-bar',`:host{display:flex;align-items:center;height:46px;box-sizing:border-box;background:#e5f4fe;border-top:1px solid #b5cbdc;border-bottom:1px solid #b5c3cd;padding-bottom:2px;color:#2e5494}
svg{display:block}.p{margin-left:9px}.c{margin:0 12px 0 9px}.x{margin-left:auto;margin-right:-3px}`,
()=>`<span class="p">${svg('<rect x=".5" y=".5" width="25" height="13" rx="2" fill="#a3adb4" stroke="#31363b"/><path d="M10.500 2.500v9M15 2.500v9" stroke="#000" stroke-width="2.200"/>',26,14)}</span><span class="c">${svg('<path d="M3 .7h15q2.500 0 2.500 2.500v8q0 2.500-2.500 2.500h-6L7 19l1-5.300H3Q.7 13.700.7 11.200v-8Q.7.7 3 .7z" fill="#fdfdfd" stroke="#a3a9ae" stroke-width="1.200"/>',22,20)}</span><fit-text w="478">Click somewhere on the map to select it as reference point</fit-text><span class="x">${svg('<circle cx="8" cy="8" r="8" fill="#31363b"/><path d="M4.500 4.500l7 7M11.500 4.500l-7 7" stroke="#fff" stroke-width="2.500"/>',16)}</span>`);

// Map geometry in window coordinates; the viewBox starts at the canvas corner
const dots=(r,...p)=>p.map(([x,y])=>`<circle cx="${x}" cy="${y}" r="${r}"/>`).join('');
define('map-canvas',`:host{display:block;flex:1;min-height:0;background:#fff;overflow:hidden}svg{display:block}`,
()=>svg(`<path d="M893 288L897 475 911 792V817h123V790L1021 473 1017 288zM374 812L889 807v10H374zM1057 804l460-4 373 3v14h-833z" fill="#c8c6ec"/>
<path d="M888 817V806L911 792.500 1034 790.500 1058 804V817z" fill="#b3d6b3"/><path d="M911 792.500L1034 790.500" stroke="#8fae99"/>
<g opacity=".85"><path d="M937.500 778.500h9.500l8 8v9l-8 8h-9.500l-8-8v-9z" fill="#a12f68" stroke="#cdbfd0"/><text x="931" y="797" font-family="Liberation Sans" font-weight="700" font-size="12.500" fill="#f5dbe9" textLength="23" lengthAdjust="spacingAndGlyphs">STOP</text><path d="M1053 813h10l6 6v9h-24v-9z" fill="#a12f68" stroke="#cdbfd0"/></g>
<g fill="none" stroke="#f00" stroke-width="5"><path d="M893 287L897 475 911 792 913 817M955 287L959 474 972.500 791 975 817M1017 287L1021 473 1034.500 790 1035 817"/><path d="M374 811L889 806 1057 804 1517 800 1890 803"/><path d="M914 807q26 1 60 8 26-7 56-10M968 817l15-9"/></g>
<path d="M888 805q14-2 22-10v10zM1036 794q7 7 20 9l-16 2z" fill="#000"/>
<g fill="#000">${dots(5.500,[910.500,792],[972.800,791],[1034.500,790],[888,806],[1057,804])}${dots(3.400,[897,475],[959,474.500],[1021,473.500],[1517,800])}${dots(3,[911,801],[917,807],[912,814],[922,804],[938,805],[943,810],[955.500,806],[965,814],[972.500,802],[972.500,811],[976,815],[984,813],[989.500,806],[1006,803],[1006,809],[1023,804],[1030,806],[1035,802],[1035,812])}</g>
<g stroke="#222" stroke-width="1" fill="#ff0"><path d="M925.500 433.500h3l1.500 58h4.500l-5 7.500-5-7.500h2.500z"/><path d="M989 432l5 7.500h-3l1.500 58h-3.500l-1-58h-4.500z"/><path d="M928.500 813l4 6h-8zM1016 815h7l-3 4z"/></g><path d="M928 435l1.200 57M989.500 440l1.200 56" stroke="#98951f" stroke-width="1.200"/><path d="M1586 817l3-2v2z" fill="#222"/>`,1515,529,'375 288 1515 529'));

define('qgis-app',`:host{display:flex;flex-direction:column;height:817px;width:1890px;overflow:hidden}
.w{display:flex;flex:1;min-height:0}.g{width:7px;flex:none;display:flex;align-items:center;justify-content:center}.g i{width:4px;height:17px;margin-top:144px;background:radial-gradient(circle at 1px 1px,#c4bfba 0.6px,transparent .9px) 0 0/2px 3px;align-self:flex-start;margin-top:355px}
.c{flex:1;display:flex;flex-direction:column;min-width:0;border-left:1px solid #b3aeaa;margin-top:1px}`,
`<top-panel></top-panel><title-bar></title-bar><menu-bar></menu-bar>
<tool-bar items=": newp open save newlay laymgr style : pan pansel zin zout zfull zsel zlay znat zlast znext newmap new3d newbm showbm clock refresh : ident table calc gear sigma measure v tip action -v ttext v"></tool-bar>
<tool-bar items=": dsrc gpkg shp feather mem | virt | : pencils pencil gsave gpts gnode -v gtable trash cut copy paste undo redo : abcY diag | abPin abcR | g1 g2 g3 g4 g5 : gl1 gl2 gl3 : py bug : help : sat"></tool-bar>
<tool-bar items=": sel v form v desel v selloc : | wire xst img gps flag redx flags | nums | !trap |"></tool-bar>
<div class="w"><layers-panel></layers-panel><div class="g"><i></i></div><div class="c"><message-bar></message-bar><map-canvas></map-canvas></div></div>`);
</script>
</body>
</html>
